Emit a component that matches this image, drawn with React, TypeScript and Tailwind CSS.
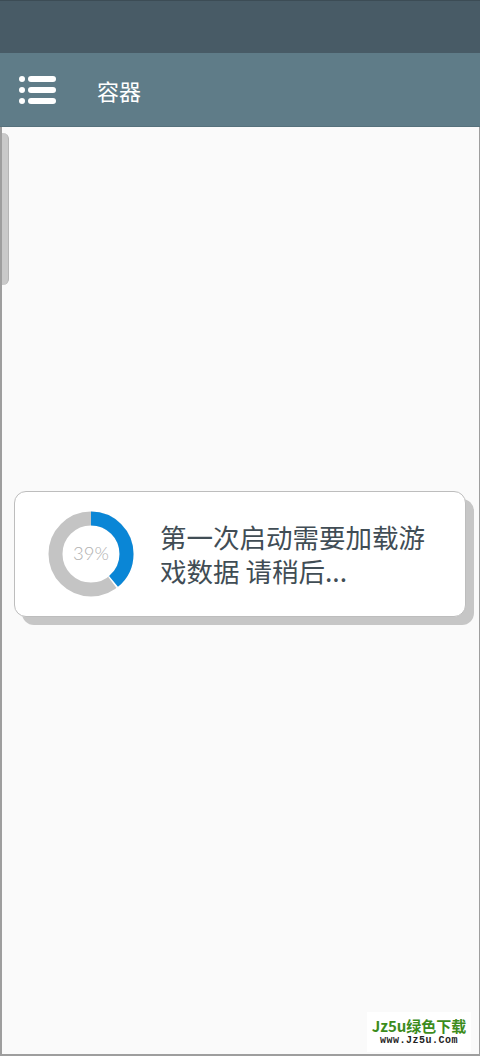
import React from 'react';

const cjk = { fontFamily: '"Noto Sans CJK SC", "Noto Sans", sans-serif' };

// donut progreso
const Donut = ({ pct }: { pct: number }) => {
  const r = 35.5;
  const c = 2 * Math.PI * r;
  const blue = (c * pct) / 100;
  return (
    <div className="relative w-[86px] h-[86px] shrink-0">
      <svg width="86" height="86" viewBox="0 0 86 86">
        <circle cx="43" cy="43" r={r} fill="none" stroke="#c4c4c4" strokeWidth="14" />
        <circle
          cx="43"
          cy="43"
          r={r}
          fill="none"
          stroke="#ffffff"
          strokeWidth="14"
          strokeDasharray={`${blue + 1.5} ${c}`}
          transform="rotate(-90 43 43)"
        />
        <circle
          cx="43"
          cy="43"
          r={r}
          fill="none"
          stroke="#0a86d6"
          strokeWidth="14"
          strokeDasharray={`${blue} ${c}`}
          transform="rotate(-90 43 43)"
        />
      </svg>
      <div
        className="absolute inset-0 flex items-center justify-center text-[18.5px] font-light text-[#b0b0b0]"
        style={{ fontFamily: 'Lato, "Open Sans", sans-serif' }}
      >
        39%
      </div>
    </div>
  );
};

export default function App() {
  return (
    <div className="w-[480px] h-[1056px] flex flex-col bg-[#fafafa] overflow-hidden" style={cjk}>
      {/* status bar */}
      <div className="h-[53px] bg-[#485b66] border-t border-[#3c4c55]" />

      {/* toolbar */}
      <div className="h-[74px] bg-[#5f7c88] flex items-center border-b border-[#56717c]">
        <div className="ml-[19px] flex flex-col gap-[5px]">
          {[0, 1, 2].map((i) => (
            <div key={i} className="flex items-center gap-[3px]">
              <div className="w-[6px] h-[6px] rounded-full bg-white" />
              <div className="w-[28px] h-[6px] rounded-full bg-white" />
            </div>
          ))}
        </div>
        <h1 className="ml-[41px] text-[22px] text-white leading-none">容器</h1>
      </div>

      {/* content */}
      <div className="relative flex-1 border-l-2 border-r border-b-2 border-[#9e9e9e]">
        <div className="absolute left-0 top-[6px] w-[7px] h-[152px] rounded-r-[6px] bg-[#c9c9c9] border-r border-[#b5b5b5]" />

        <div className="mt-[364px] ml-[12px] mr-[13px] h-[126px] bg-white border-[1.5px] border-[#bdbdbd] rounded-[12px] shadow-[8px_8px_0_#c6c6c6] flex items-center pl-[33px]">
          <Donut pct={39} />
          <p className="ml-[26px] text-[26.5px] leading-[34px] text-[#414d55] w-[275px]">
            第一次启动需要加载游戏数据 请稍后...
          </p>
        </div>

        {/* watermark */}
        <div className="absolute right-[8px] bottom-[2px] w-[104px] h-[40px] bg-white flex flex-col items-center justify-center">
          <span className="text-[15px] font-bold text-[#3c8c1c] leading-[18px]">Jz5u绿色下载</span>
          <span
            className="text-[10px] font-bold text-[#222] leading-[12px] tracking-[0.5px]"
            style={{ fontFamily: '"Liberation Mono", monospace' }}
          >
            www.Jz5u.Com
          </span>
        </div>
      </div>
    </div>
  );
}
